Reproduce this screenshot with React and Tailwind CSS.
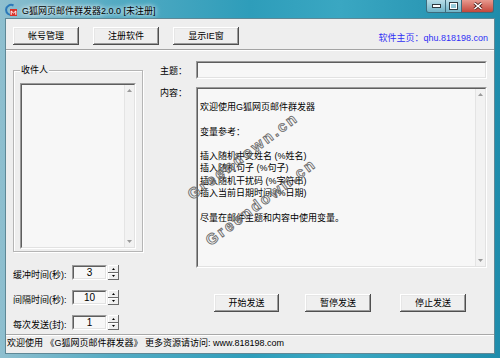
import React from "react";

const Btn = ({ children, className }) => (
  <div
    className={
      "flex items-center justify-center h-[18px] bg-[#efefef] text-[9px] leading-[12px] whitespace-nowrap shadow-[inset_-1px_-1px_#4f4f4f,inset_1px_1px_#ffffff,inset_-2px_-2px_#9c9c9c,inset_2px_2px_#e6e6e6] " +
      className
    }
  >
    {children}
  </div>
);

const Sunken = ({ children, className }) => (
  <div
    className={
      "border border-t-[#9a9a9a] border-l-[#9a9a9a] border-r-[#ffffff] border-b-[#ffffff] " +
      className
    }
  >
    <div className="w-full h-full border border-t-[#5e5e5e] border-l-[#5e5e5e] border-r-[#e2e2e2] border-b-[#e2e2e2] bg-[#f7f7f7] flex">
      {children}
    </div>
  </div>
);

const Up = () => (
  <svg width="5" height="3" viewBox="0 0 5 3">
    <path d="M0 3 L2.5 0 L5 3 Z" fill="#9a9a9a" />
  </svg>
);
const Down = () => (
  <svg width="5" height="3" viewBox="0 0 5 3">
    <path d="M0 0 L2.5 3 L5 0 Z" fill="#9a9a9a" />
  </svg>
);

const ScrollBar = () => (
  <div className="ml-auto w-[10px] h-full border-l border-l-[#e4e4e4] bg-[#f2f2f2] flex flex-col items-center justify-between py-[4px]">
    <Up />
    <Down />
  </div>
);

const SpinHalf = ({ up }) => (
  <div className="flex-1 flex items-center justify-center bg-[#efefef] shadow-[inset_-1px_-1px_#6a6a6a,inset_1px_1px_#ffffff]">
    <svg width="3" height="2" viewBox="0 0 3 2">
      {up ? <path d="M0 2 L1.5 0 L3 2 Z" fill="#000" /> : <path d="M0 0 L1.5 2 L3 0 Z" fill="#000" />}
    </svg>
  </div>
);

const Spin = ({ label, value }) => (
  <div className="flex items-start h-[15px]">
    <div className="w-[59px] pt-[4px] text-[9px] leading-[12px] whitespace-nowrap">{label}</div>
    <Sunken className="w-[35px] h-[15px]">
      <div className="flex-1 flex items-center justify-center text-[10px] leading-[11px]">{value}</div>
    </Sunken>
    <div className="ml-[1px] w-[11px] h-[15px] flex flex-col">
      <SpinHalf up />
      <SpinHalf />
    </div>
  </div>
);

export default function App() {
  return (
    <div className="w-[500px] h-[358px] relative overflow-hidden flex flex-col bg-[linear-gradient(90deg,#8fbfcf_0%,#55abc3_22%,#2e9dba_50%,#3aa7c2_68%,#1f8cab_100%)] font-['Liberation_Sans','Noto_Sans_CJK_SC',sans-serif] text-black">
      {/* Title bar */}
      <div className="h-[19px] flex items-start">
        <svg className="ml-[5px] mt-[3px]" width="12" height="14" viewBox="0 0 12 14">
          <path d="M8.5 2.5 A5 5 0 1 0 8 11.5" stroke="#2b78b8" strokeWidth="2" fill="none" />
          <rect x="5" y="6" width="7" height="7" fill="#d8322a" />
          <path d="M6.2 11.8 V8 L8.5 10 L10.8 8 V11.8" stroke="#ffffff" strokeWidth="1" fill="none" />
        </svg>
        <div className="ml-[5px] mt-[5px] text-[9px] leading-[12px] whitespace-nowrap [text-shadow:0_0_4px_#ffffff,0_0_6px_#ffffff]">
          G狐网页邮件群发器2.0.0 [未注册]
        </div>
        <div className="ml-auto mr-[6px] flex h-[13px] rounded-b-[3px] overflow-hidden border border-t-0 border-[#3d6b7c]">
          <div className="w-[19px] h-full flex items-center justify-center bg-[linear-gradient(180deg,#b9dde8,#6fb3c7)] border-r border-r-[#3d6b7c]">
            <svg width="9" height="4" viewBox="0 0 9 4">
              <rect x="0.5" y="0.5" width="8" height="3" fill="#ffffff" stroke="#2e3a40" strokeWidth="1" />
            </svg>
          </div>
          <div className="w-[16px] h-full flex items-center justify-center bg-[linear-gradient(180deg,#b9dde8,#6fb3c7)] border-r border-r-[#3d6b7c]">
            <svg width="9" height="8" viewBox="0 0 9 8">
              <rect x="0.5" y="0.5" width="8" height="7" fill="none" stroke="#2e3a40" strokeWidth="1" />
              <rect x="1.5" y="1.5" width="6" height="5" fill="none" stroke="#ffffff" strokeWidth="1" />
            </svg>
          </div>
          <div className="w-[31px] h-full flex items-center justify-center bg-[linear-gradient(180deg,#e7998e,#c4473b)]">
            <svg width="10" height="8" viewBox="0 0 10 8">
              <path d="M1.5 1 L8.5 7 M8.5 1 L1.5 7" stroke="#4a1c18" strokeWidth="3" />
              <path d="M1.5 1 L8.5 7 M8.5 1 L1.5 7" stroke="#ffffff" strokeWidth="1.6" />
            </svg>
          </div>
        </div>
      </div>

      {/* Client */}
      <div className="mx-[6px] h-[334px] bg-[#eeeeee] shadow-[0_0_0_1px_#5f8896] flex flex-col">
        {/* toolbar */}
        <div className="h-[26px] flex items-start pt-[8px] pl-[7px] pr-[6px]">
          <Btn className="w-[66px]">帐号管理</Btn>
          <Btn className="w-[66px] ml-[14px]">注册软件</Btn>
          <Btn className="w-[66px] ml-[14px]">显示IE窗</Btn>
          <div className="ml-auto mt-[5px] text-[9px] leading-[12px] text-[#2f2ff5] whitespace-nowrap">
            软件主页：qhu.818198.con
          </div>
        </div>
        <div className="mt-[4px] border-t border-t-[#a3a3a3] border-b border-b-[#ffffff]" />

        {/* body */}
        <div className="flex-1 flex">
          {/* left column */}
          <div className="ml-[7px] w-[130px] flex flex-col">
            <div className="mt-[19px] h-[182px] relative border border-[#b5b5b5] shadow-[inset_1px_1px_#ffffff,1px_1px_#ffffff] pt-[12px] px-[6px] pb-[2px] flex">
              <div className="absolute left-[6px] top-[-7px] px-[1px] bg-[#eeeeee] text-[9px] leading-[12px]">收件人</div>
              <Sunken className="flex-1 h-full">
                <ScrollBar />
              </Sunken>
            </div>
            <div className="mt-[13px] flex flex-col gap-[10px]">
              <Spin label="缓冲时间(秒):" value="3" />
              <Spin label="间隔时间(秒):" value="10" />
              <Spin label="每次发送(封):" value="1" />
            </div>
          </div>

          {/* right column */}
          <div className="ml-[17px] w-[327px] flex flex-col">
            <div className="mt-[10px] flex items-start h-[18px]">
              <div className="w-[36px] pt-[4px] text-[9px] leading-[12px] whitespace-nowrap">主题：</div>
              <Sunken className="flex-1 h-[18px]" />
            </div>
            <div className="mt-[8px] flex items-start">
              <div className="w-[36px] pt-[0px] text-[9px] leading-[12px] whitespace-nowrap">内容：</div>
              <Sunken className="flex-1 h-[181px]">
                <div className="flex-1 pl-[2px] pt-[12px] text-[9px] leading-[12.3px] whitespace-pre">
                  {"欢迎使用G狐网页邮件群发器\n\n变量参考：\n\n插入随机中文姓名 (%姓名)\n插入随机句子 (%句子)\n插入随机干扰码 (%字符串)\n插入当前日期时间 (%日期)\n\n尽量在邮件主题和内容中使用变量。"}
                </div>
                <ScrollBar />
              </Sunken>
            </div>
            <div className="mt-[26px] flex pl-[54px]">
              <Btn className="w-[65px]">开始发送</Btn>
              <Btn className="w-[66px] ml-[26px]">暂停发送</Btn>
              <Btn className="w-[66px] ml-[29px]">停止发送</Btn>
            </div>
          </div>
        </div>

        {/* status bar */}
        <div className="h-[19px] border-t border-t-[#a8a8a8] shadow-[inset_0_1px_#ffffff] pl-[1px] pt-[2px] text-[9px] leading-[12px] whitespace-nowrap">
          欢迎使用 《G狐网页邮件群发器》 更多资源请访问: www.818198.com
        </div>
      </div>

      {/* watermarks */}
      <div className="pointer-events-none absolute left-[243px] top-[156px] -translate-x-1/2 -translate-y-1/2 rotate-[-37deg] text-[15px] font-bold tracking-[2.5px] leading-[16px] text-transparent [-webkit-text-stroke:0.9px_#6e6e6e] font-['Liberation_Sans',sans-serif] whitespace-nowrap">
        Greendown.cn
      </div>
      <div className="pointer-events-none absolute left-[261px] top-[202px] -translate-x-1/2 -translate-y-1/2 rotate-[-37deg] text-[15px] font-bold tracking-[2.5px] leading-[16px] text-transparent [-webkit-text-stroke:0.9px_#6e6e6e] font-['Liberation_Sans',sans-serif] whitespace-nowrap">
        Greendown.cn
      </div>
    </div>
  );
}
